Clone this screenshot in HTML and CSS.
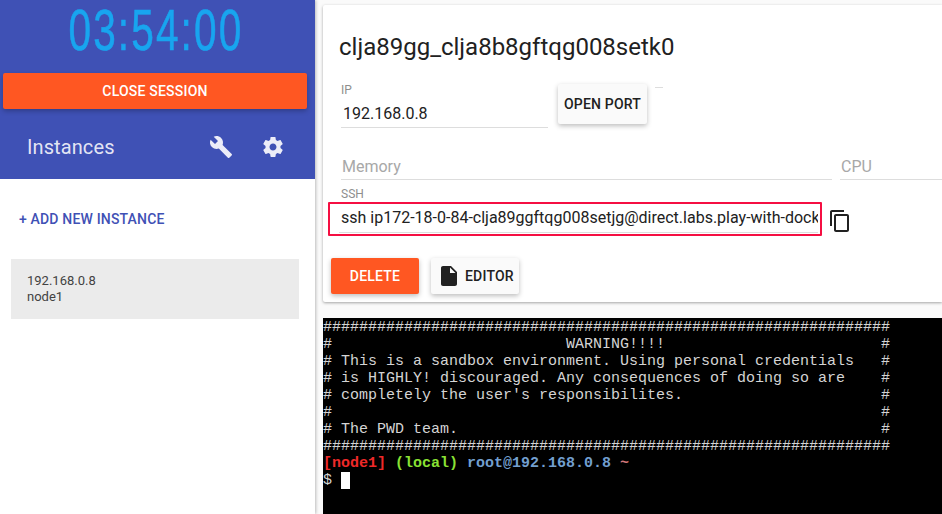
FILE: index.html
```html
<!DOCTYPE html>
<html lang="en">
<head>
<meta charset="utf-8">
<title>Play with Docker</title>
<link rel="stylesheet" href="styles.css">
</head>
<body>
<div class="app">
  <aside class="sidebar">
    <header class="side-head">
      <div class="timer"><span class="timer-text">03:54:00</span></div>
      <button class="btn btn-close">CLOSE SESSION</button>
      <div class="inst-bar">
        <span class="inst-title">Instances</span>
        <svg class="ico ico-wrench" viewBox="0 0 24 24"><path d="M22.7 19l-9.1-9.1c.9-2.3.4-5-1.5-6.9-2-2-5-2.4-7.4-1.3L9 6 6 9 1.6 4.7C.4 7.1.9 10.1 2.9 12.1c1.9 1.9 4.6 2.4 6.9 1.5l9.1 9.1c.4.4 1 .4 1.4 0l2.3-2.3c.5-.4.5-1.1.1-1.4z"/></svg>
        <svg class="ico ico-gear" viewBox="0 0 24 24"><path d="M19.43 12.98c.04-.32.07-.64.07-.98s-.03-.66-.07-.98l2.11-1.65c.19-.15.24-.42.12-.64l-2-3.46c-.12-.22-.39-.3-.61-.22l-2.49 1c-.52-.4-1.08-.73-1.69-.98l-.38-2.65C14.46 2.18 14.25 2 14 2h-4c-.25 0-.46.18-.49.42l-.38 2.65c-.61.25-1.17.59-1.69.98l-2.49-1c-.23-.09-.49 0-.61.22l-2 3.46c-.13.22-.07.49.12.64l2.11 1.65c-.04.32-.07.65-.07.98s.03.66.07.98l-2.11 1.65c-.19.15-.24.42-.12.64l2 3.46c.12.22.39.3.61.22l2.49-1c.52.4 1.08.73 1.69.98l.38 2.65c.03.24.24.42.49.42h4c.25 0 .46-.18.49-.42l.38-2.65c.61-.25 1.17-.59 1.69-.98l2.49 1c.23.09.49 0 .61-.22l2-3.46c.12-.22.07-.49-.12-.64l-2.11-1.65zM12 15.5c-1.93 0-3.5-1.57-3.5-3.5s1.57-3.5 3.5-3.5 3.5 1.57 3.5 3.5-1.57 3.5-3.5 3.5z"/></svg>
      </div>
    </header>
    <div class="add-inst">+ ADD NEW INSTANCE</div>
    <div class="inst-item">
      <div>192.168.0.8</div>
      <div>node1</div>
    </div>
  </aside>
  <main class="main">
    <section class="card">
      <h1 class="title">clja89gg_clja8b8gftqg008setk0</h1>
      <div class="ip-row">
        <div class="field field-ip">
          <label class="lbl">IP</label>
          <div class="val">192.168.0.8</div>
        </div>
        <button class="btn btn-light btn-port">OPEN PORT</button>
        <span class="dash"></span>
      </div>
      <div class="stat-row">
        <div class="stat stat-mem">Memory</div>
        <div class="stat stat-cpu">CPU</div>
      </div>
      <label class="lbl lbl-ssh">SSH</label>
      <div class="ssh-row">
        <div class="ssh-box"><div class="ssh-val">ssh ip172-18-0-84-clja89ggftqg008setjg@direct.labs.play-with-docker.com</div></div>
        <svg class="ico ico-copy" viewBox="0 0 24 24"><path d="M16 1H4c-1.1 0-2 .9-2 2v14h2V3h12V1zm3 4H8c-1.1 0-2 .9-2 2v14c0 1.1.9 2 2 2h11c1.1 0 2-.9 2-2V7c0-1.1-.9-2-2-2zm0 16H8V7h11v14z"/></svg>
      </div>
      <div class="action-row">
        <button class="btn btn-delete">DELETE</button>
        <button class="btn btn-light btn-editor">
          <svg class="ico ico-file" viewBox="0 0 24 24"><path d="M6 2c-1.1 0-1.99.9-1.99 2L4 20c0 1.1.89 2 1.99 2H18c1.1 0 2-.9 2-2V8l-6-6H6zm7 7V3.5L18.5 9H13z"/></svg>
          EDITOR
        </button>
      </div>
    </section>
    <section class="term">
<pre class="term-text">###############################################################
#                          WARNING!!!!                        #
# This is a sandbox environment. Using personal credentials   #
# is HIGHLY! discouraged. Any consequences of doing so are    #
# completely the user's responsibilites.                      #
#                                                             #
# The PWD team.                                               #
###############################################################
<span class="t-red">[node1]</span> <span class="t-green">(local)</span> <span class="t-blue">root@192.168.0.8</span> <span class="t-pink">~</span>
$ <span class="cursor"> </span></pre>
    </section>
  </main>
</div>
</body>
</html>
```
FILE: styles.css
```css
* { box-sizing: border-box; }
html, body { margin: 0; padding: 0; height: 100%; overflow: hidden; }
body { font-family: Roboto, "Liberation Sans", sans-serif; background: #fafafa; color: #212121; }
.app { display: flex; width: 942px; height: 514px; overflow: hidden; }

.sidebar { width: 315px; flex: none; background: #fff; box-shadow: 1px 0 3px rgba(0,0,0,.25); }
.side-head { height: 179px; background: #3f51b5; }
.timer { height: 73px; padding-right: 3px; text-align: center; }
.timer-text { display: inline-block; font-family: "Liberation Sans", sans-serif; font-size: 58px; line-height: 60px; letter-spacing: 3px; color: #18a5ef; -webkit-text-stroke: .6px #18a5ef; transform: scaleX(.7); }
.btn { border: 0; border-radius: 2px; font-family: Roboto, sans-serif; font-weight: 500; font-size: 14px; letter-spacing: .2px; white-space: nowrap; padding: 0; }
.btn-close { display: block; margin-left: 3px; width: 304px; height: 36px; background: #ff5722; color: #fff; box-shadow: 0 2px 5px rgba(0,0,0,.26); }
.inst-bar { display: flex; align-items: center; height: 40px; margin-top: 18px; padding-left: 27px; }
.inst-title { font-size: 20px; letter-spacing: .1px; color: rgba(255,255,255,.87); flex: 1; }
.ico { display: block; fill: currentColor; flex: none; }
.ico-wrench, .ico-gear { width: 24px; height: 24px; color: #ecedf8; }
.ico-gear { margin-left: 28px; margin-right: 30px; }

.add-inst { margin: 32px 0 0 19px; height: 16px; line-height: 16px; font-size: 14px; font-weight: 500; letter-spacing: .17px; color: #3f51b5; }
.inst-item { margin: 32px 16px 0 11px; height: 60px; padding: 14px 16px; background: #ebebeb; font-size: 13px; line-height: 16px; color: #424242; }

.main { flex: 1; min-width: 0; padding: 5px 0 0 8px; }
.card { height: 297px; background: #fff; padding: 26px 0 0 16px; border-radius: 2px 0 0 2px; box-shadow: 0 1px 3px rgba(0,0,0,.35); overflow: hidden; }
.title { margin: 0; font-size: 24px; line-height: 32px; font-weight: 400; color: #212121; white-space: nowrap; }

.ip-row { display: flex; align-items: flex-start; margin-top: 20px; padding-left: 2px; }
.field-ip { width: 207px; height: 45px; border-bottom: 1px solid #ddd; }
.lbl { display: block; font-size: 12px; line-height: 14px; color: #8e8e8e; }
.val { margin-top: 4px; padding-left: 2px; font-size: 16px; line-height: 26px; color: #212121; }
.btn-light { background: #fafafa; color: #212121; box-shadow: 0 2px 5px rgba(0,0,0,.26); }
.btn-port { margin-left: 10px; margin-top: 1px; width: 89px; height: 40px; flex: none; }
.dash { width: 8px; height: 1px; margin: 4px 0 0 8px; background: #ddd; }

.stat-row { display: flex; gap: 8px; margin-top: 25px; padding-left: 2px; }
.stat { height: 27px; padding: 1px 0 0 1px; font-size: 16px; line-height: 26px; color: #a8a8a8; border-bottom: 1px solid #ddd; }
.stat-mem { width: 491px; }
.stat-cpu { flex: 1; padding-left: 1px; }

.lbl-ssh { margin: 7px 0 0 2px; }
.ssh-row { display: flex; align-items: flex-start; margin-left: -11px; margin-top: 1px; }
.ssh-box { width: 494px; height: 34px; border: 2px solid #f50f42; border-radius: 1px; padding: 0 2px 0 9px; }
.ssh-val { height: 29px; padding: 1px 0 0 2px; border-bottom: 1px solid #ddd; font-size: 16px; line-height: 25px; color: #212121; white-space: nowrap; overflow: hidden; }
.ico-copy { width: 24px; height: 24px; margin: 7px 0 0 6px; color: #212121; }

.action-row { display: flex; gap: 12px; margin-top: 22px; margin-left: -8px; }
.btn-delete { width: 88px; height: 36px; background: #ff5722; color: #fff; box-shadow: 0 2px 5px rgba(0,0,0,.26); }
.btn-editor { display: flex; align-items: center; gap: 4px; width: 88px; height: 36px; padding-left: 6px; }
.ico-file { width: 24px; height: 24px; color: #212121; }

.term { height: 196px; margin-top: 16px; background: #000; padding: 1px 0 0 0; overflow: hidden; }
.term-text { margin: 0; font-family: "Liberation Mono", monospace; font-size: 15px; line-height: 17px; color: #d4d4d4; }
.t-red { color: #ef2929; font-weight: 700; }
.t-green { color: #8ae234; font-weight: 700; }
.t-blue { color: #729fcf; font-weight: 700; }
.t-pink { color: #d3777a; font-weight: 700; }
.cursor { background: #fff; }
```
